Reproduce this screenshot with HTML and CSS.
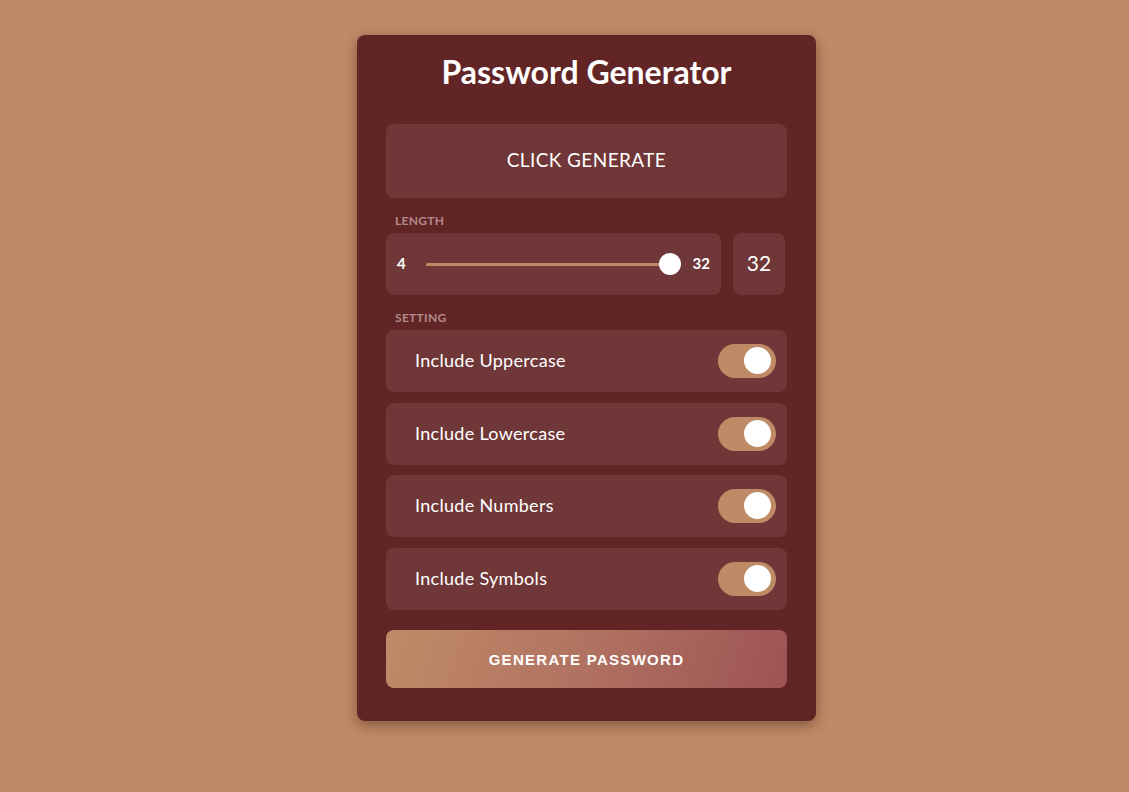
FILE: index.html
```html
<!DOCTYPE html>
<html lang="en">
<head>
<meta charset="utf-8">
<title>Password Generator</title>
<link rel="stylesheet" href="styles.css">
</head>
<body>
<main class="card">
  <h1 class="title">Password Generator</h1>
  <div class="result">CLICK GENERATE</div>

  <div class="label">LENGTH</div>
  <div class="length-row">
    <div class="slider-box">
      <span class="num">4</span>
      <div class="track">
        <div class="thumb"></div>
      </div>
      <span class="num">32</span>
    </div>
    <div class="value-box">32</div>
  </div>

  <div class="label">SETTING</div>
  <div class="settings">
    <div class="setting"><span>Include Uppercase</span><span class="toggle"><span class="knob"></span></span></div>
    <div class="setting"><span>Include Lowercase</span><span class="toggle"><span class="knob"></span></span></div>
    <div class="setting"><span>Include Numbers</span><span class="toggle"><span class="knob"></span></span></div>
    <div class="setting"><span>Include Symbols</span><span class="toggle"><span class="knob"></span></span></div>
  </div>

  <button class="generate">GENERATE PASSWORD</button>
</main>
</body>
</html>
```

FILE: styles.css
```css
* { box-sizing: border-box; }

body {
  margin: 0;
  min-height: 792px;
  background: #bf8b67;
  display: flex;
  justify-content: center;
  align-items: flex-start;
  padding: 35px 0 0 44px;
  font-family: "Lato", "Noto Sans", sans-serif;
  color: #fff;
}

.card {
  width: 459px;
  background: #622526;
  border-radius: 8px;
  padding: 0 29px 33px;
  box-shadow: 0 4px 14px rgba(60, 20, 10, 0.45);
}

.title {
  margin: 0 0 34px;
  padding-top: 18px;
  font-size: 32px;
  line-height: 37px;
  font-weight: 700;
  text-align: center;
}

.result {
  height: 74px;
  background: #703738;
  border-radius: 8px;
  display: flex;
  align-items: center;
  justify-content: center;
  padding-bottom: 3px;
  font-size: 19px;
  letter-spacing: 0.4px;
}

.label {
  margin: 16px 0 5px 9px;
  font-size: 12px;
  line-height: 14px;
  font-weight: 700;
  letter-spacing: 0.3px;
  color: #b28b8b;
}

.length-row {
  display: grid;
  grid-template-columns: 1fr 52px;
  gap: 12px;
  margin-right: 2px;
}

.slider-box {
  height: 62px;
  background: #703738;
  border-radius: 8px;
  display: flex;
  align-items: center;
  padding: 0 11px;
}

.num {
  font-size: 15px;
  font-weight: 700;
  padding-bottom: 2px;
}

.track {
  position: relative;
  flex: 1;
  height: 3px;
  margin: 0 23px 0 20px;
  background: #bf8b67;
  border-radius: 2px;
}

.thumb {
  position: absolute;
  right: -11px;
  top: 50%;
  width: 22px;
  height: 22px;
  margin-top: -11px;
  border-radius: 50%;
  background: #fff;
}

.value-box {
  height: 62px;
  background: #703738;
  border-radius: 8px;
  display: flex;
  align-items: center;
  justify-content: center;
  padding-bottom: 3px;
  font-size: 21px;
}

.settings {
  display: flex;
  flex-direction: column;
  gap: 10.5px;
}

.setting {
  height: 62px;
  background: #703738;
  border-radius: 8px;
  display: flex;
  align-items: center;
  justify-content: space-between;
  padding: 0 11px 0 29px;
  font-size: 18px;
  letter-spacing: 0.3px;
}

.setting > span:first-child {
  padding-bottom: 2px;
}

.toggle {
  position: relative;
  width: 58px;
  height: 34px;
  border-radius: 17px;
  background: #bf8b67;
}

.knob {
  position: absolute;
  right: 5px;
  top: 3px;
  width: 27px;
  height: 27px;
  border-radius: 50%;
  background: #fff;
}

.generate {
  display: block;
  width: 100%;
  height: 58px;
  margin-top: 20.5px;
  border: 0;
  border-radius: 8px;
  background: linear-gradient(110deg, #c08b68 0%, #b27562 45%, #9d5354 100%);
  color: #fff;
  font-family: "Liberation Sans", Arial, sans-serif;
  font-size: 15px;
  font-weight: 700;
  letter-spacing: 1.3px;
}
```
